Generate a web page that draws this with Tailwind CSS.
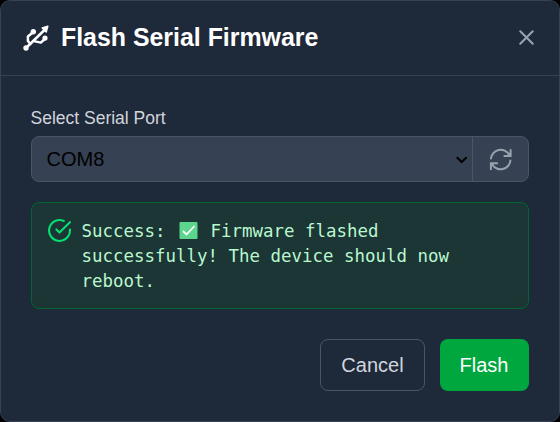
<!DOCTYPE html>
<html lang="en">
<head>
<meta charset="utf-8">
<title>Flash Serial Firmware</title>
<script src="https://cdn.jsdelivr.net/npm/@tailwindcss/browser@4"></script>
</head>
<body class="h-[422px] w-[560px] overflow-hidden bg-black font-['Liberation_Sans',Arial,sans-serif]">
<div class="flex h-[422px] w-[560px] flex-col rounded-[10px] border border-[#364153] bg-[#1e2939]">
  <header class="flex h-[75px] shrink-0 items-center border-b border-[#364153] pb-[2px] pl-[22px] pr-[20px]">
    <svg class="size-[27px] shrink-0 text-white" viewBox="0 0 27 27" fill="none" stroke="currentColor" stroke-width="2.5" stroke-linecap="round" stroke-linejoin="round">
      <path d="M3 24 22.5 5"/>
      <path d="M7.4 19.8 4.9 17V12.5L10 8.2"/>
      <path d="M12 17.4 17.8 18.6 22.3 14.5"/>
      <circle cx="3" cy="24" r="2" fill="currentColor" stroke-width="1.4"/>
      <circle cx="10.3" cy="7.8" r="1.8" fill="currentColor" stroke-width="1.8"/>
      <path d="M19.2 4 24.8 2.2 23.2 8Z" fill="currentColor" stroke-width="1.5"/>
      <circle cx="22" cy="14.1" r="1.8" fill="currentColor" stroke-width="1.6"/>
    </svg>
    <h1 class="ml-[11px] text-[24.9px] leading-[35px] font-bold text-white">Flash Serial Firmware</h1>
    <button class="ml-auto flex size-[25px] items-center justify-center text-[#99a1af]" aria-label="Close">
      <svg class="size-[25px]" viewBox="0 0 24 24" fill="none" stroke="currentColor" stroke-width="2" stroke-linecap="round"><path d="M6 18 18 6M6 6l12 12"/></svg>
    </button>
  </header>
  <main class="flex flex-col px-[30px] pt-[30px]">
    <label class="-ml-[0.5px] text-[17.5px] leading-[25px] text-[#d1d5dc]">Select Serial Port</label>
    <div class="mt-[5px] flex h-[46px] overflow-hidden rounded-[8px] border border-[#4a5565] bg-[#364153]">
      <div class="flex flex-1 items-center justify-between pl-[14.5px] pr-[4px] text-[20px] text-black">
        <span>COM8</span>
        <svg class="size-[13px]" viewBox="0 0 13 13" fill="none" stroke="currentColor" stroke-width="2"><path d="m1.8 4.3 4.9 4.7 4.9-4.7"/></svg>
      </div>
      <button class="flex w-[56px] items-center justify-center border-l border-[#4a5565] text-[#99a1af]" aria-label="Refresh">
        <svg class="size-[25px]" viewBox="0 0 25 25" fill="none" stroke="currentColor" stroke-width="2"><path d="M22.6 2.2V8.9H15.6M2.9 12.3A9.8 9.8 0 0 1 21.6 8.5M2.9 23V16.3H9.9M22.5 12.7A9.8 9.8 0 0 1 3.8 16.6"/></svg>
      </button>
    </div>
    <section class="mt-[20px] flex h-[107px] rounded-[8px] border border-[#016630] bg-[#1c3535] pl-[15px] pt-[15px]">
      <svg class="size-[25px] shrink-0 text-[#05df72]" viewBox="0 0 24 24" fill="none" stroke="currentColor" stroke-width="2" stroke-linecap="round" stroke-linejoin="round"><path d="M22 11.08V12a10 10 0 1 1-5.93-9.14"/><path d="m9 11 3 3L22 4"/></svg>
      <p class="ml-[9.5px] pt-px font-['DejaVu_Sans_Mono',monospace] text-[17.44px] leading-[25px] text-[#b9f8cf]">Success: <svg class="inline-block h-[17px] w-[24px] align-[-2px]" viewBox="0 0 24 17"><rect x="3.5" y="0" width="18" height="17" rx="1" fill="#5bd68c"/><path d="m7 9 3.5 3.5 8-8.5" fill="none" stroke="#fff" stroke-width="1.8"/></svg> Firmware flashed<br>successfully! The device should now<br>reboot.</p>
    </section>
    <footer class="mt-[30px] flex justify-end gap-[15px] text-[20px]">
      <button class="h-[52px] w-[105px] rounded-[8px] border border-[#4a5565] text-[#d1d5dc]">Cancel</button>
      <button class="h-[52px] w-[89px] rounded-[8px] bg-[#00a63e] pr-px text-white">Flash</button>
    </footer>
  </main>
</div>
</body>
</html>
